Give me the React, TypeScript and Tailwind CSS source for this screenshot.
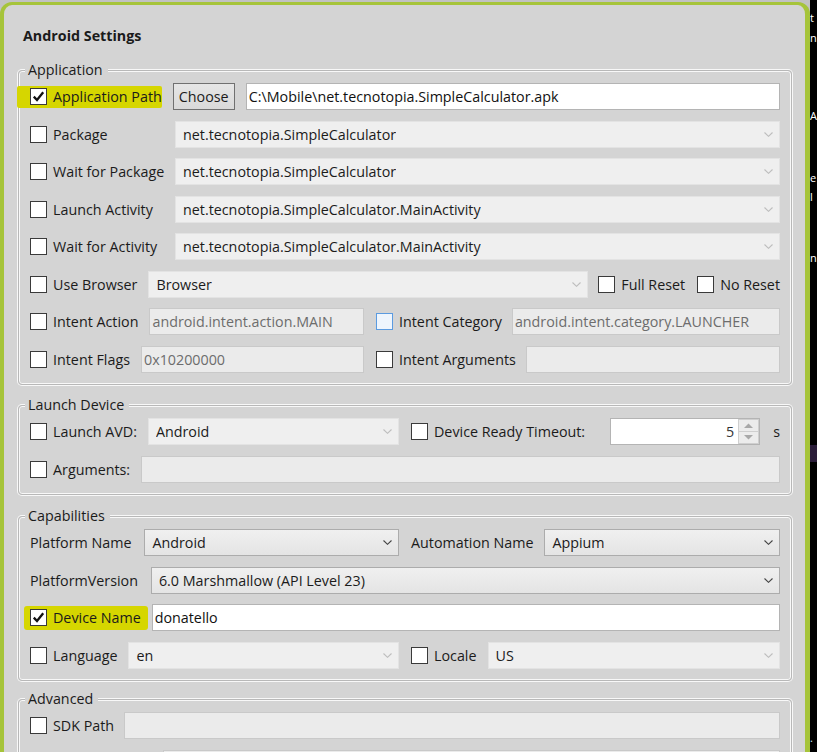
import React from "react";

type Kids = { children?: React.ReactNode };

const Check = ({ checked, focus }: { checked?: boolean; focus?: boolean }) => (
  <span
    className={`flex h-[17px] w-[17px] shrink-0 items-center justify-center border ${
      focus ? "border-[#5b9be0] bg-[#eef5fd]" : "border-[#3a3a3a] bg-white"
    }`}
  >
    {checked && (
      <svg width="13" height="13" viewBox="0 0 13 13">
        <path d="M1.8 6.6 L5 10 L11.2 2.2" fill="none" stroke="#111" strokeWidth="2.3" />
      </svg>
    )}
  </span>
);

const CheckLabel = ({ label, checked, focus }: { label: string; checked?: boolean; focus?: boolean }) => (
  <div className="flex shrink-0 items-center gap-[6px] whitespace-nowrap">
    <Check checked={checked} focus={focus} />
    <span>{label}</span>
  </div>
);

const Chevron = ({ dark }: { dark?: boolean }) => (
  <svg width="9" height="5" viewBox="0 0 9 5" className="shrink-0">
    <path d="M0.5 0.5 L4.5 4.3 L8.5 0.5" fill="none" stroke={dark ? "#444" : "#bdbdbd"} strokeWidth="1.1" />
  </svg>
);

const Combo = ({ value, enabled, className = "" }: { value: string; enabled?: boolean; className?: string }) => (
  <div
    className={`flex h-[27px] min-w-0 items-center justify-between border pl-[7px] pr-[6px] ${
      enabled ? "border-[#acacac] bg-linear-to-b from-[#f0f0f0] to-[#e4e4e4]" : "border-[#e3e3e3] bg-[#efefef]"
    } ${className}`}
  >
    <span className="truncate">{value}</span>
    <Chevron dark={enabled} />
  </div>
);

const Field = ({ value = "", white, className = "" }: { value?: string; white?: boolean; className?: string }) => (
  <div
    className={`flex h-[27px] min-w-0 items-center border pl-[2px] whitespace-nowrap ${
      white ? "border-[#b4b4b4] bg-white text-[#111]" : "border-[#c9c9c9] bg-[#ebebeb] text-[#6d6d6d]"
    } ${className}`}
  >
    {value}
  </div>
);

const Row = ({ children }: Kids) => <div className="flex h-[37.5px] items-center">{children}</div>;

const Group = ({ title, children, className = "" }: Kids & { title: string; className?: string }) => (
  <fieldset
    className={`rounded-[4px] border border-[#b8b8b8] px-[11px] pb-[6px] shadow-[0_0_0_1px_#f8f8f8,inset_0_0_0_1px_#f8f8f8] ${className}`}
  >
    <legend className="-ml-[5px] bg-[#d4d4d4] pl-[3px] pr-[5px] leading-[16px]">{title}</legend>
    {children}
  </fieldset>
);

const Spinner = () => (
  <div className="flex h-[27px] w-[150px] shrink-0 border border-[#b4b4b4] bg-white">
    <div className="flex flex-1 items-center justify-end pr-[4px] text-[#333]">5</div>
    <div className="flex w-[21px] flex-col">
      <div className="flex flex-1 items-center justify-center border border-[#cfcfcf] bg-[#ececec]">
        <svg width="9" height="5" viewBox="0 0 9 5">
          <path d="M0 5 L4.5 0.5 L9 5 Z" fill="#a8a8a8" />
        </svg>
      </div>
      <div className="flex flex-1 items-center justify-center border border-t-0 border-[#cfcfcf] bg-[#ececec]">
        <svg width="9" height="5" viewBox="0 0 9 5">
          <path d="M0 0 L4.5 4.5 L9 0 Z" fill="#a8a8a8" />
        </svg>
      </div>
    </div>
  </div>
);

export default function App() {
  return (
    <div className="flex h-[752px] w-[817px] overflow-hidden bg-[#c2c2c2] font-['Open_Sans',sans-serif] text-[14.3px] text-[#1b1b1b]">
      <div className="mt-[2px] flex h-[780px] w-[810px] shrink-0 flex-col rounded-t-[12px] border-t-[3px] border-r-[5px] border-l-4 border-[#a6c43a] bg-[#d4d4d4] pl-[14px] pr-[13px]">
        <div className="ml-[5px] mt-[21px] leading-[20px] font-bold">Android Settings</div>

        <div className="mt-[16px] flex flex-col gap-[12px]">
          <Group title="Application">
            <Row>
              <div className="-ml-[13px] flex h-[22px] items-center rounded-[2px] bg-[#d6d600] pl-[13px]">
                <CheckLabel label="Application Path" checked />
              </div>
              <button className="ml-[11px] h-[27px] w-[62px] shrink-0 border border-[#707070] bg-linear-to-b from-[#e6e6e6] to-[#d9d9d9]">
                Choose
              </button>
              <Field white value="C:\Mobile\net.tecnotopia.SimpleCalculator.apk" className="ml-[11px] flex-1" />
            </Row>
            <Row>
              <div className="w-[145px] shrink-0">
                <CheckLabel label="Package" />
              </div>
              <Combo value="net.tecnotopia.SimpleCalculator" className="flex-1" />
            </Row>
            <Row>
              <div className="w-[145px] shrink-0">
                <CheckLabel label="Wait for Package" />
              </div>
              <Combo value="net.tecnotopia.SimpleCalculator" className="flex-1" />
            </Row>
            <Row>
              <div className="w-[145px] shrink-0">
                <CheckLabel label="Launch Activity" />
              </div>
              <Combo value="net.tecnotopia.SimpleCalculator.MainActivity" className="flex-1" />
            </Row>
            <Row>
              <div className="w-[145px] shrink-0">
                <CheckLabel label="Wait for Activity" />
              </div>
              <Combo value="net.tecnotopia.SimpleCalculator.MainActivity" className="flex-1" />
            </Row>
            <Row>
              <CheckLabel label="Use Browser" />
              <Combo value="Browser" className="ml-[11px] flex-1" />
              <div className="ml-[10px]">
                <CheckLabel label="Full Reset" />
              </div>
              <div className="ml-[12px]">
                <CheckLabel label="No Reset" />
              </div>
            </Row>
            <Row>
              <div className="flex w-[334px] shrink-0 items-center">
                <CheckLabel label="Intent Action" />
                <Field value="android.intent.action.MAIN" className="ml-[11px] flex-1" />
              </div>
              <div className="ml-[12px] flex flex-1 items-center">
                <CheckLabel label="Intent Category" focus />
                <Field value="android.intent.category.LAUNCHER" className="ml-[10px] flex-1" />
              </div>
            </Row>
            <Row>
              <div className="flex w-[334px] shrink-0 items-center">
                <CheckLabel label="Intent Flags" />
                <Field value="0x10200000" className="ml-[11px] flex-1" />
              </div>
              <div className="ml-[12px] flex flex-1 items-center">
                <CheckLabel label="Intent Arguments" />
                <Field className="ml-[10px] flex-1" />
              </div>
            </Row>
          </Group>

          <Group title="Launch Device">
            <Row>
              <div className="flex w-[369px] shrink-0 items-center">
                <CheckLabel label="Launch AVD:" />
                <Combo value="Android" className="ml-[11px] flex-1" />
              </div>
              <div className="ml-[12px] flex flex-1 items-center">
                <div className="flex-1">
                  <CheckLabel label="Device Ready Timeout:" />
                </div>
                <Spinner />
                <span className="ml-[13px]">s</span>
              </div>
            </Row>
            <Row>
              <CheckLabel label="Arguments:" />
              <Field className="ml-[11px] flex-1" />
            </Row>
          </Group>

          <Group title="Capabilities" className="mt-[1px]">
            <Row>
              <div className="flex w-[369px] shrink-0 items-center">
                <span className="whitespace-nowrap">Platform Name</span>
                <Combo enabled value="Android" className="ml-[13px] flex-1" />
              </div>
              <div className="ml-[12px] flex flex-1 items-center">
                <span className="whitespace-nowrap">Automation Name</span>
                <Combo enabled value="Appium" className="ml-[11px] flex-1" />
              </div>
            </Row>
            <Row>
              <span className="whitespace-nowrap">PlatformVersion</span>
              <Combo enabled value="6.0 Marshmallow (API Level 23)" className="ml-[13px] flex-1" />
            </Row>
            <Row>
              <div className="-ml-[6px] flex h-[24px] items-center rounded-[3px] bg-[#d6d600] pl-[6px] pr-[7px]">
                <CheckLabel label="Device Name" checked />
              </div>
              <Field white value="donatello" className="ml-[4px] flex-1" />
            </Row>
            <Row>
              <div className="flex w-[369px] shrink-0 items-center">
                <CheckLabel label="Language" />
                <Combo value="en" className="ml-[11px] flex-1" />
              </div>
              <div className="ml-[12px] flex flex-1 items-center">
                <CheckLabel label="Locale" />
                <Combo value="US" className="ml-[11px] flex-1" />
              </div>
            </Row>
          </Group>

          <Group title="Advanced" className="-mt-[2px]">
            <Row>
              <CheckLabel label="SDK Path" />
              <Field className="ml-[10px] flex-1" />
            </Row>
            <Row>
              <Check />
              <Field className="ml-[116px] flex-1" />
            </Row>
          </Group>
        </div>
      </div>

      <div className="flex min-w-0 flex-1 flex-col overflow-hidden bg-black text-[11px] leading-[20px] text-white">
        <div className="mt-[8px]">t</div>
        <div>n</div>
        <div className="mt-[58px]">A</div>
        <div className="mt-[42px]">e</div>
        <div className="-mt-[1px]">l</div>
        <div className="mt-[41px]">n</div>
        <div className="mt-[177px] h-[17px] shrink-0 bg-[#2a1c38]" />
        <div className="mt-[266px] text-[#cfefff]">.</div>
      </div>
    </div>
  );
}
